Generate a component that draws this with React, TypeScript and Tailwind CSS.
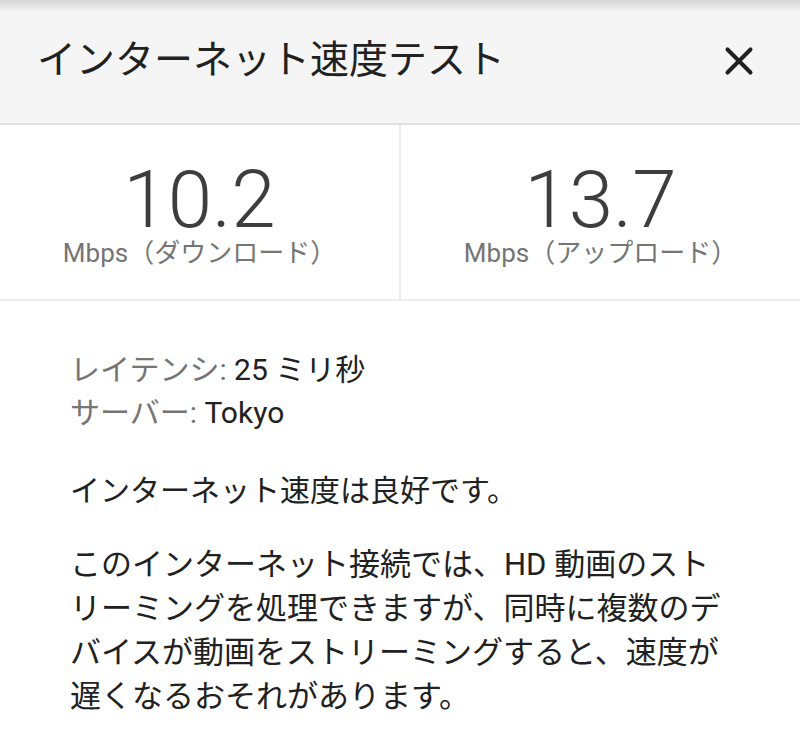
import { X } from 'lucide-react'

const font = { fontFamily: 'Roboto, "Noto Sans CJK JP", sans-serif' }

function Stat({ value, label }: { value: string; label: string }) {
  return (
    <div className="flex flex-1 flex-col items-center pt-[39px]">
      <div className="text-[80px] font-light leading-[72px] text-[#3d3d3d]">{value}</div>
      <div className="mt-[1px] text-[26px] leading-[32px] text-[#757575]">{label}</div>
    </div>
  )
}

export default function App() {
  return (
    <div className="h-[744px] w-[800px] overflow-hidden bg-white" style={font}>
      {/* Header */}
      <div className="border-b-2 border-[#e2e2e2] bg-[#f5f5f5]">
        <div className="h-[12px] bg-gradient-to-b from-[#d4d4d4] to-[#f5f5f5]" />
        <div className="flex h-[111px] items-center justify-between pl-[37px] pr-[38px] pb-[14px]">
          <span className="text-[39px] text-[#212121]">インターネット速度テスト</span>
          <X className="h-[46px] w-[46px] text-[#212121]" strokeWidth={2.1} />
        </div>
      </div>

      {/* Speeds */}
      <div className="flex h-[176px] border-b-2 border-[#ececec]">
        <Stat value="10.2" label="Mbps（ダウンロード）" />
        <div className="w-[2px] bg-[#ececec]" />
        <Stat value="13.7" label="Mbps（アップロード）" />
      </div>

      {/* Details */}
      <div className="px-[70px] pt-[47px] text-[30px] text-[#212121]">
        <div className="leading-[43px]">
          <div>
            <span className="text-[#757575]">レイテンシ:</span> 25 ミリ秒
          </div>
          <div>
            <span className="text-[#757575]">サーバー:</span> Tokyo
          </div>
        </div>
        <p className="mt-[35px] leading-[44px]">インターネット速度は良好です。</p>
        <p className="mt-[30px] w-[670px] text-[31px] leading-[44px]">
          このインターネット接続では、HD 動画のストリーミングを処理できますが、同時に複数のデバイスが動画をストリーミングすると、速度が遅くなるおそれがあります。
        </p>
      </div>
    </div>
  )
}
